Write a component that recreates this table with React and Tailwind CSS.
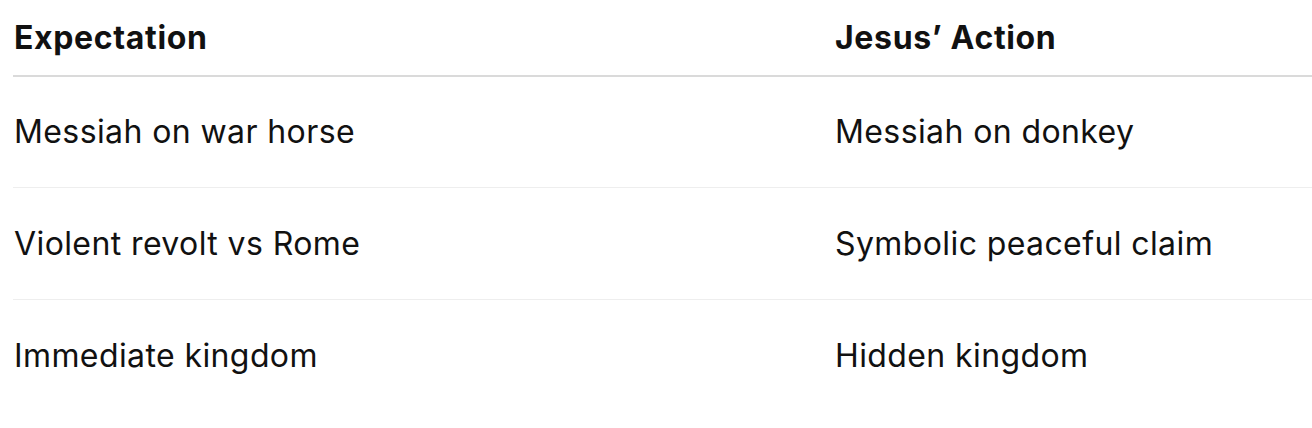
export default function App() {
  const rows = [
    ["Messiah on war horse", "Messiah on donkey", "h-[111px] border-b border-[#eeeeee]"],
    ["Violent revolt vs Rome", "Symbolic peaceful claim", "h-[112px] border-b border-[#eeeeee]"],
    ["Immediate kingdom", "Hidden kingdom", "h-[112px]"],
  ];
  return (
    <div className="w-[1312px] h-[428px] bg-white overflow-hidden text-[#111111]" style={{ fontFamily: "Inter, 'Noto Sans', sans-serif" }}>
      <div className="ml-[13px]">
        <div className="grid grid-cols-[822px_1fr] h-[77px] items-center border-b-2 border-[#dadada] text-[32px] font-bold tracking-[0.65px]">
          <div className="pl-px">Expectation</div>
          <div>Jesus’ Action</div>
        </div>
        {rows.map((r, i) => (
          <div
            key={i}
            className={"grid grid-cols-[822px_1fr] items-center text-[32px] tracking-[0.4px] " + r[2]}
          >
            <div className="pl-px">{r[0]}</div>
            <div>{r[1]}</div>
          </div>
        ))}
      </div>
    </div>
  );
}
